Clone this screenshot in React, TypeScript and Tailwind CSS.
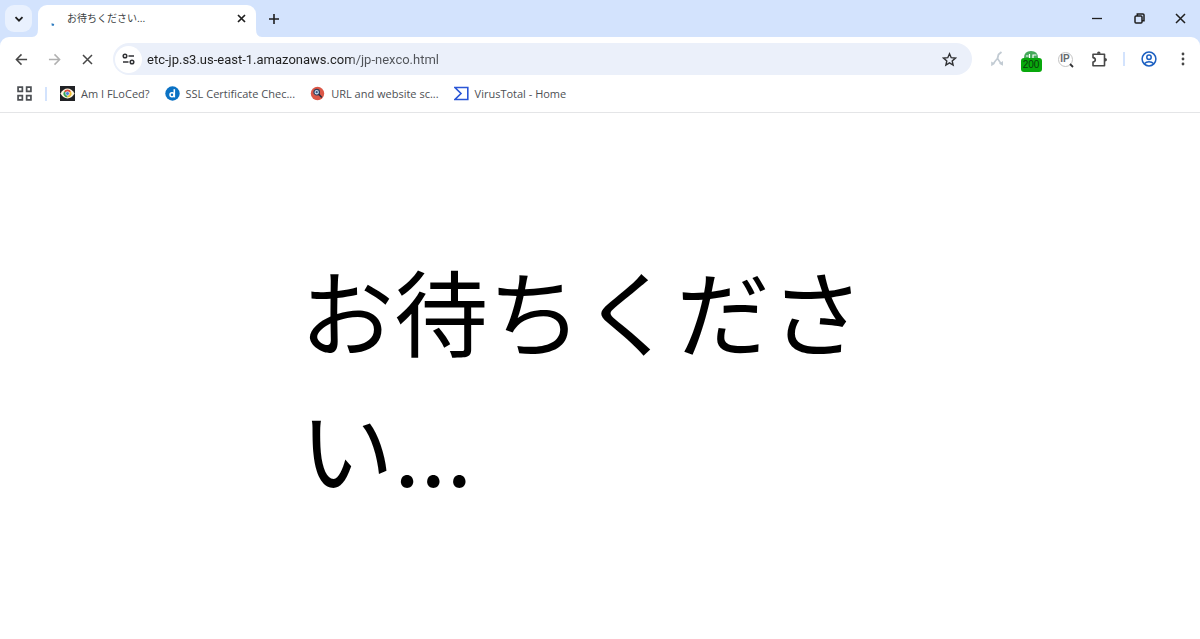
import type { ReactNode } from "react";

type IconButtonProps = {
  label: string;
  className?: string;
  children: ReactNode;
};

const IconButton = ({ label, className = "w-[34px]", children }: IconButtonProps) => (
  <button
    type="button"
    aria-label={label}
    className={`flex h-8 shrink-0 items-center justify-center ${className}`}
  >
    {children}
  </button>
);

const stroke = {
  fill: "none",
  stroke: "currentColor",
  strokeWidth: 1.6,
} as const;

const TabStrip = () => (
  <header className="flex h-[37px] items-end bg-[#d3e3fd] text-[#1f1f1f]">
    <div className="flex h-full items-center pl-[5px]">
      <button
        type="button"
        aria-label="Search tabs"
        className="flex size-[27px] items-center justify-center rounded-[9px] bg-[#e9f1fe]"
      >
        <svg width="10" height="10" viewBox="0 0 10 10" {...stroke} strokeWidth="1.8">
          <path d="M1.5 3.2 5 6.7l3.5-3.5" />
        </svg>
      </button>
    </div>

    <svg width="6" height="8" viewBox="0 0 6 8" className="shrink-0">
      <path d="M6 0v8H0q6 0 6-8z" fill="#fff" />
    </svg>
    <div className="flex h-8 w-[218px] items-center rounded-t-[9px] bg-white pr-[11px] pb-1.5 pl-3">
      <svg width="12" height="16" viewBox="0 0 12 16" className="shrink-0">
        <path d="M1.500 13.300 4.200 14l-.3 1.800H1.800z" fill="#2f7cc0" />
      </svg>
      <span
        lang="ja"
        className="ml-[5px] flex-1 text-[10px] leading-4 whitespace-nowrap text-[#3c3f43] font-['Noto_Sans_CJK_JP',sans-serif]"
      >
        お待ちください...
      </span>
      <button type="button" aria-label="Close tab" className="flex w-2 items-center justify-center">
        <svg width="9" height="9" viewBox="0 0 9 9" {...stroke} strokeWidth="1.7" className="shrink-0">
          <path d="m1 1 7 7M8 1 1 8" />
        </svg>
      </button>
    </div>
    <svg width="6" height="8" viewBox="0 0 6 8" className="shrink-0">
      <path d="M0 0v8h6Q0 8 0 0z" fill="#fff" />
    </svg>
    <div className="flex h-full items-center">
      <IconButton label="New tab" className="w-6">
        <svg width="12" height="12" viewBox="0 0 12 12" {...stroke}>
          <path d="M6 1v10M1 6h10" />
        </svg>
      </IconButton>
    </div>

    <div className="ml-auto flex h-full items-center pb-px">
      <IconButton label="Minimize" className="w-[43px]">
        <svg width="12" height="12" viewBox="0 0 12 12" {...stroke} strokeWidth="1.3">
          <path d="M1 6.500h10" />
        </svg>
      </IconButton>
      <IconButton label="Restore" className="w-[43px]">
        <svg width="11" height="11" viewBox="0 0 11 11" {...stroke} strokeWidth="1.5">
          <rect x="1" y="3" width="7" height="7" rx="1" />
          <path d="M3.300 3V1H9q1 0 1 1v5.700H8" />
        </svg>
      </IconButton>
      <IconButton label="Close" className="w-[39px]">
        <svg width="11" height="11" viewBox="0 0 11 11" {...stroke} strokeWidth="1.5">
          <path d="m1 1 9 9M10 1l-9 9" />
        </svg>
      </IconButton>
    </div>
  </header>
);

const AddressBar = () => (
  <div className="mr-2 ml-[9px] flex h-8 min-w-0 flex-1 items-center rounded-full bg-[#ebf0fa] pr-1.5 pl-0.5">
    <button
      type="button"
      aria-label="View site information"
      className="flex size-[27px] shrink-0 items-center justify-center rounded-full bg-white text-[#303134]"
    >
      <svg width="13" height="12" viewBox="0 0 13 12" {...stroke} strokeWidth="1.5">
        <circle cx="3" cy="3" r="1.8" />
        <path d="M6.5 3H12M1 9h5.5" />
        <circle cx="10" cy="9" r="1.8" />
      </svg>
    </button>
    {/* host is drawn darker than the path */}
    <input
      type="text"
      aria-label="Address"
      defaultValue="etc-jp.s3.us-east-1.amazonaws.com/jp-nexco.html"
      className="ml-[5px] h-6 min-w-0 flex-1 bg-[linear-gradient(to_right,#1f1f1f_205px,#505358_205px)] bg-clip-text text-[13px] text-transparent outline-none font-['Roboto',sans-serif]"
    />
    <IconButton label="Bookmark this tab">
      <svg width="15" height="15" viewBox="0 0 15 15" {...stroke} strokeWidth="1.4" className="text-[#303134]">
        <path d="m7.5 1.8 1.7 3.9 4.2.4-3.2 2.8.9 4.1-3.6-2.1L3.9 13l.9-4.1-3.2-2.8 4.2-.4z" />
      </svg>
    </IconButton>
  </div>
);

const Toolbar = () => (
  <div className="flex h-11 items-center pl-[5px] text-[#474747]">
    <IconButton label="Back" className="w-[33px]">
      <svg width="13" height="13" viewBox="0 0 14 14" {...stroke}>
        <path d="M13 7H2M7 1.5 1.5 7 7 12.5" />
      </svg>
    </IconButton>
    <IconButton label="Forward" className="w-[33px]">
      <svg width="13" height="13" viewBox="0 0 14 14" {...stroke} className="text-[#b0b0b0]">
        <path d="M1 7h11M7 1.5 12.5 7 7 12.5" />
      </svg>
    </IconButton>
    <IconButton label="Stop loading" className="w-[33px]">
      <svg width="11" height="11" viewBox="0 0 11 11" {...stroke} strokeWidth="1.5">
        <path d="m1 1 9 9M10 1l-9 9" />
      </svg>
    </IconButton>

    <AddressBar />

    <IconButton label="Redirect path">
      <svg width="14" height="16" viewBox="0 0 14 16" fill="none" stroke="#c2cbd3">
        <path d="M11.500 1 8.500 3.500 7.500 7.500" strokeWidth="1.800" />
        <path d="m7.500 7.500-2 2.300-2 2.700M7.500 7.500l3.300 4.700" strokeWidth="1.600" />
        <path d="m1.200 10.500 3.800 2.300-3.800 2.400zM13 10v4.700l-4-2z" fill="#c2cbd3" stroke="none" />
      </svg>
    </IconButton>
    <IconButton label="HTTP status 200">
      <span className="mt-1 flex flex-col items-center">
        <svg width="16" height="7" viewBox="0 0 16 7">
          <path d="M1 7Q1 0 8 0t7 7z" fill="#45a95a" />
          <path d="M3 5h2.5M6.5 3v4M10 7V4h3.5" stroke="#fff" strokeWidth="1.2" fill="none" />
        </svg>
        <span className="h-[14px] w-[21px] rounded-[3px] bg-[#08a80c] text-center text-[10px] leading-[14px] text-[#083b0b] font-['Liberation_Sans',Arial,sans-serif]">
          200
        </span>
      </span>
    </IconButton>
    <IconButton label="IP lookup">
      <span className="relative flex size-[15px] items-center justify-center rounded-full border border-[#c4c4c4] text-[10px] leading-none font-bold text-[#66696d] font-['Liberation_Sans',Arial,sans-serif]">
        IP
        <svg width="5" height="5" viewBox="0 0 5 5" className="absolute -right-0.5 -bottom-0.5">
          <path d="m1 1 3 3" stroke="#303134" strokeWidth="1.8" />
        </svg>
      </span>
    </IconButton>
    <IconButton label="Extensions">
      <svg width="17" height="17" viewBox="0 0 17 17" {...stroke} strokeLinejoin="round">
        <path d="M2 3.2h11.5v11.5H2V11q2.3-.3 2.3-2.2T2 6.6z" />
        <path d="M6 2.8q0-2.2 1.8-2.2t1.8 2.2zM14 7q2 0 2 1.8t-2 1.8z" fill="currentColor" stroke="none" />
      </svg>
    </IconButton>
    <span className="mx-[7px] h-3.5 w-0.5 shrink-0 bg-[#d3e3fd]" />
    <IconButton label="Profile">
      <svg width="16" height="16" viewBox="0 0 16 16" fill="none" stroke="#1b5fc1" strokeWidth="1.5">
        <circle cx="8" cy="8" r="6.9" />
        <circle cx="8" cy="6.3" r="2.2" />
        <path d="M3.3 12.8Q5.2 10.8 8 10.8t4.7 2" />
      </svg>
    </IconButton>
    <IconButton label="Menu">
      <svg width="4" height="14" viewBox="0 0 4 14" fill="currentColor">
        <circle cx="2" cy="2" r="1.4" />
        <circle cx="2" cy="7" r="1.4" />
        <circle cx="2" cy="12" r="1.4" />
      </svg>
    </IconButton>
  </div>
);

const bookmarks = [
  {
    title: "Am I FLoCed?",
    icon: (
      <svg width="15" height="15" viewBox="0 0 15 15">
        <path d="M0 0h15v15H0z" fill="#202124" />
        <path d="M.4 7.5Q3.5 2.600 7.5 2.600t7.100 4.900Q11.500 12.400 7.500 12.400T.4 7.500z" fill="#fff7df" />
        <path d="M7.500 7.500 4 5.500a4 4 0 0 1 7 0z" fill="#e04a3a" />
        <path d="M7.500 7.500 4 5.500a4 4 0 0 0 3.500 6z" fill="#3aa757" />
        <path d="M7.500 7.500v4a4 4 0 0 0 3.500-6z" fill="#f2c230" />
        <circle cx="7.500" cy="7.500" r="1.900" fill="#4a7fd8" stroke="#fff" strokeWidth=".6" />
      </svg>
    ),
  },
  {
    title: "SSL Certificate Chec...",
    icon: (
      <svg width="15" height="15" viewBox="0 0 15 15">
        <circle cx="7.500" cy="7.500" r="7.200" fill="#0b72c4" />
        <circle cx="7" cy="8.700" r="2" fill="none" stroke="#fff" strokeWidth="1.500" />
        <path d="M9.300 3.200v8.200" stroke="#fff" strokeWidth="1.600" />
      </svg>
    ),
  },
  {
    title: "URL and website sc...",
    icon: (
      <svg width="15" height="15" viewBox="0 0 15 15">
        <circle cx="7.500" cy="7.500" r="6.700" fill="#dc5747" />
        <circle cx="6.700" cy="6.200" r="2.800" fill="#c6dcf0" stroke="#34405c" strokeWidth="1.200" />
        <circle cx="6.700" cy="6.200" r="1.100" fill="#35517c" />
        <path d="m8.800 8.300 3 3.200" stroke="#2b2c3d" strokeWidth="1.600" />
      </svg>
    ),
  },
  {
    title: "VirusTotal - Home",
    icon: (
      <svg width="15" height="15" viewBox="0 0 15 15">
        <path d="M1 1.500h12.800v12H1l6-6z" fill="none" stroke="#2a56d6" strokeWidth="1.600" />
      </svg>
    ),
  },
];

const BookmarksBar = () => (
  <nav
    aria-label="Bookmarks"
    className="flex h-8 items-center border-b border-[#e4e5e7] pb-1.5 pl-3 text-[#4d5054]"
  >
    <IconButton label="All apps" className="w-6">
      <svg width="15" height="15" viewBox="0 0 14 14" {...stroke}>
        <path d="M1 1h4v4H1zM9 1h4v4H9zM1 9h4v4H1zM9 9h4v4H9z" />
      </svg>
    </IconButton>
    <span className="mr-[13px] ml-[9px] h-3.5 w-0.5 bg-[#d3e3fd]" />
    <div className="flex gap-[15px]">
      {bookmarks.map(({ title, icon }) => (
        <a key={title} href="#" className="flex items-center gap-1.5 text-[11px] leading-4 whitespace-nowrap">
          {icon}
          {title}
        </a>
      ))}
    </div>
  </nav>
);

export default function App() {
  return (
    <div className="min-h-screen bg-white font-['Open_Sans','Noto_Sans',sans-serif]">
      <div className="bg-[#d3e3fd]">
        <TabStrip />
        <div className="rounded-t-[9px] bg-white">
          <Toolbar />
          <BookmarksBar />
        </div>
      </div>
      <main className="mx-auto w-1/2 pt-32">
        <h1
          lang="ja"
          className="text-[94px] leading-[137px] text-black font-['Noto_Sans_CJK_JP',sans-serif]"
        >
          お待ちください...
        </h1>
      </main>
    </div>
  );
}
